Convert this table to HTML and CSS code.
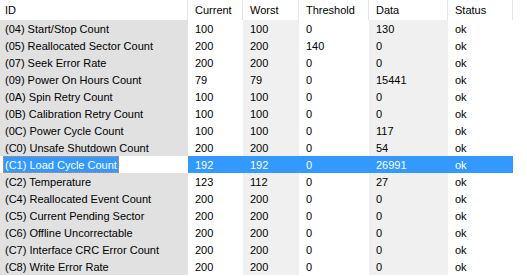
FILE: index.html
```html
<!DOCTYPE html>
<html lang="en">
<head>
    <meta charset="UTF-8">
    <title>S.M.A.R.T.</title>
    <link rel="stylesheet" href="styles.css">
</head>
<body>
    <div class="list">
        <div class="head">
            <div class="col">ID</div>
            <div class="col">Current</div>
            <div class="col">Worst</div>
            <div class="col">Threshold</div>
            <div class="col">Data</div>
            <div class="col">Status</div>
            <div class="col rest"></div>
        </div>

        <div class="row"><div class="c id">(04) Start/Stop Count</div><div class="c">100</div><div class="c">100</div><div class="c">0</div><div class="c">130</div><div class="c">ok</div><div class="c rest"></div></div>
        <div class="row"><div class="c id">(05) Reallocated Sector Count</div><div class="c">200</div><div class="c">200</div><div class="c">140</div><div class="c">0</div><div class="c">ok</div><div class="c rest"></div></div>
        <div class="row"><div class="c id">(07) Seek Error Rate</div><div class="c">200</div><div class="c">200</div><div class="c">0</div><div class="c">0</div><div class="c">ok</div><div class="c rest"></div></div>
        <div class="row"><div class="c id">(09) Power On Hours Count</div><div class="c">79</div><div class="c">79</div><div class="c">0</div><div class="c">15441</div><div class="c">ok</div><div class="c rest"></div></div>
        <div class="row"><div class="c id">(0A) Spin Retry Count</div><div class="c">100</div><div class="c">100</div><div class="c">0</div><div class="c">0</div><div class="c">ok</div><div class="c rest"></div></div>
        <div class="row"><div class="c id">(0B) Calibration Retry Count</div><div class="c">100</div><div class="c">100</div><div class="c">0</div><div class="c">0</div><div class="c">ok</div><div class="c rest"></div></div>
        <div class="row"><div class="c id">(0C) Power Cycle Count</div><div class="c">100</div><div class="c">100</div><div class="c">0</div><div class="c">117</div><div class="c">ok</div><div class="c rest"></div></div>
        <div class="row"><div class="c id">(C0) Unsafe Shutdown Count</div><div class="c">200</div><div class="c">200</div><div class="c">0</div><div class="c">54</div><div class="c">ok</div><div class="c rest"></div></div>
        <div class="row sel"><div class="c id"><span class="focus">(C1) Load Cycle Count</span></div><div class="c">192</div><div class="c">192</div><div class="c">0</div><div class="c">26991</div><div class="c">ok</div><div class="c rest"></div></div>
        <div class="row"><div class="c id">(C2) Temperature</div><div class="c">123</div><div class="c">112</div><div class="c">0</div><div class="c">27</div><div class="c">ok</div><div class="c rest"></div></div>
        <div class="row"><div class="c id">(C4) Reallocated Event Count</div><div class="c">200</div><div class="c">200</div><div class="c">0</div><div class="c">0</div><div class="c">ok</div><div class="c rest"></div></div>
        <div class="row"><div class="c id">(C5) Current Pending Sector</div><div class="c">200</div><div class="c">200</div><div class="c">0</div><div class="c">0</div><div class="c">ok</div><div class="c rest"></div></div>
        <div class="row"><div class="c id">(C6) Offline Uncorrectable</div><div class="c">200</div><div class="c">200</div><div class="c">0</div><div class="c">0</div><div class="c">ok</div><div class="c rest"></div></div>
        <div class="row"><div class="c id">(C7) Interface CRC Error Count</div><div class="c">200</div><div class="c">200</div><div class="c">0</div><div class="c">0</div><div class="c">ok</div><div class="c rest"></div></div>
        <div class="row"><div class="c id">(C8) Write Error Rate</div><div class="c">200</div><div class="c">200</div><div class="c">0</div><div class="c">0</div><div class="c">ok</div><div class="c rest"></div></div>
    </div>
</body>
</html>
```

FILE: styles.css
```css
* {
    margin: 0;
    padding: 0;
    box-sizing: border-box;
}

body {
    background: #fff;
    overflow: hidden;
    font-family: "Liberation Sans", Arial, sans-serif;
    font-size: 11px;
    color: #000;
}

.list {
    width: 527px;
}

.head,
.row {
    display: grid;
    grid-template-columns: 188px 55px 56px 70px 79px 65px 1fr;
}

.head {
    height: 20px;
}

.head .col {
    padding: 3px 0 0 7px;
    line-height: 14px;
    border-right: 1px solid #e5e5e5;
    white-space: nowrap;
}

.head .col:first-child {
    padding-left: 5px;
}

.head .rest {
    border-right: none;
}

.row {
    height: 17px;
}

.row .c {
    padding: 2px 0 0 7px;
    line-height: 14px;
    white-space: nowrap;
    overflow: hidden;
}

.row .id {
    background: #e1e1e1;
    padding-left: 5px;
}

/* every second value column is shaded */
.row .c:nth-child(3),
.row .c:nth-child(5) {
    background: #f0f0f0;
}

.row.sel .c {
    background: #3399ff;
    color: #fff;
}

.row.sel .id {
    background: #fff;
    padding: 0 0 0 3px;
}

.row.sel .rest {
    background: #fff;
}

.focus {
    display: inline-block;
    height: 17px;
    padding: 1px 1px 0 1px;
    line-height: 14px;
    background: #3399ff;
    border: 1px dotted #ee8a2b;
}
```
